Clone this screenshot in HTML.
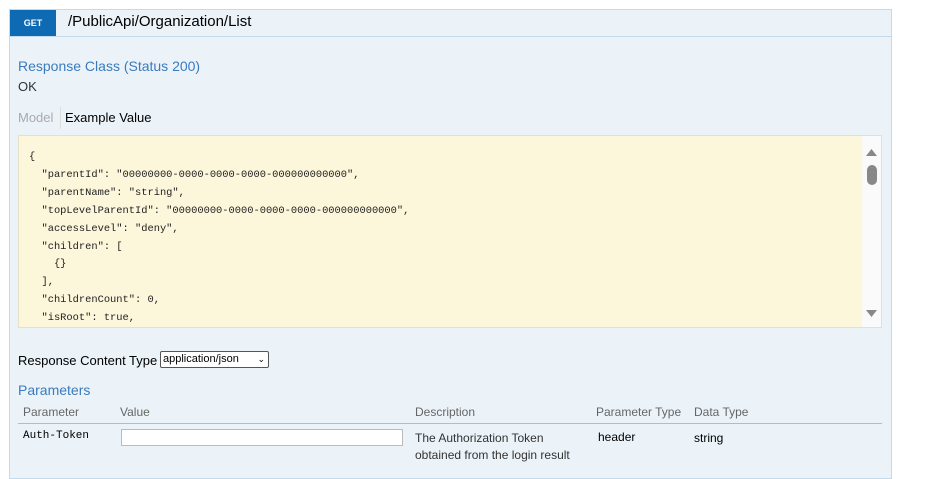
<!DOCTYPE html>
<html><head><meta charset="utf-8"><style>
body{margin:0;width:936px;height:477px;background:#fff;font-family:"Liberation Sans",sans-serif;overflow:hidden;position:relative}
.panel{position:absolute;left:9px;top:9px;width:883px;height:470px;background:#ebf3f9;border:1px solid #c3d9ec;box-sizing:border-box}
.hdr{position:absolute;left:0;top:0;right:0;height:26px;border-bottom:1px solid #c3d9ec}
.get{position:absolute;left:0;top:0;width:46px;height:26px;background:#0f6ab4;color:#fff;font-size:9px;font-weight:bold;text-align:center;line-height:26px}
.path{position:absolute;left:58px;top:3px;font-size:15px;color:#000}
.a{position:absolute;font-size:13px}
.blue{color:#3a7bbf}
.code{position:absolute;left:18px;top:135px;width:864px;height:193px;background:#fcf6db;border:1px solid #e5e0c6;box-sizing:border-box;overflow:hidden}
pre{margin:0;position:absolute;left:10px;top:13px;font-family:"Liberation Mono",monospace;font-size:10.4px;line-height:17.9px;color:#222}
.sb{position:absolute;right:0;top:0;width:19px;height:191px;background:#fafafa}
.sel{position:absolute;left:160px;top:351px;width:109px;height:17px;border:1px solid #555;background:#fff;font-size:11px;line-height:15px;box-sizing:border-box;padding-left:2px;border-radius:2px}
</style></head><body>
<div class="panel">
<div class="hdr"><div class="get">GET</div><div class="path">/PublicApi/Organization/List</div></div>
</div>
<div class="a blue" style="left:18px;top:58px;font-size:14px">Response Class (Status 200)</div>
<div class="a" style="left:18px;top:79px;color:#333">OK</div>
<div class="a" style="left:18px;top:110px;color:#aaa">Model</div>
<div style="position:absolute;left:60px;top:107px;width:1px;height:22px;background:#ddd"></div>
<div class="a" style="left:65px;top:110px;color:#000">Example Value</div>
<div class="code"><pre>{
  "parentId": "00000000-0000-0000-0000-000000000000",
  "parentName": "string",
  "topLevelParentId": "00000000-0000-0000-0000-000000000000",
  "accessLevel": "deny",
  "children": [
    {}
  ],
  "childrenCount": 0,
  "isRoot": true,</pre>
<div class="sb"><svg width="19" height="191"><path d="M4 20L9.5 13L15 20Z" fill="#888"/><rect x="5" y="29" width="10" height="20" rx="5" fill="#888"/><path d="M4 174L9.5 181L15 174Z" fill="#888"/></svg></div>
</div>
<div class="a" style="left:18px;top:353px;color:#000">Response Content Type</div>
<div class="sel">application/json <span style="position:absolute;right:3px;top:0;font-size:9px">&#8964;</span></div>
<div class="a blue" style="left:18px;top:382px;font-size:14px">Parameters</div>
<div class="a" style="left:23px;top:405px;font-size:12px;color:#666">Parameter</div>
<div class="a" style="left:120px;top:405px;font-size:12px;color:#666">Value</div>
<div class="a" style="left:415px;top:405px;font-size:12px;color:#666">Description</div>
<div class="a" style="left:596px;top:405px;font-size:12px;color:#666">Parameter Type</div>
<div class="a" style="left:694px;top:405px;font-size:12px;color:#666">Data Type</div>
<div style="position:absolute;left:18px;top:423px;width:864px;height:1px;background:#bbb"></div>
<div class="a" style="left:23px;top:430px;font-family:'Liberation Mono',monospace;font-size:11px;color:#000">Auth-Token</div>
<div style="position:absolute;left:121px;top:429px;width:282px;height:17px;background:#fff;border:1px solid #bbb;box-sizing:border-box"></div>
<div class="a" style="left:415px;top:430px;font-size:12px;line-height:17px;color:#333">The Authorization Token<br>obtained from the login result</div>
<div class="a" style="left:598px;top:430px;font-size:12px;color:#000">header</div>
<div class="a" style="left:694px;top:431px;font-size:12px;color:#000">string</div>
</body></html>
